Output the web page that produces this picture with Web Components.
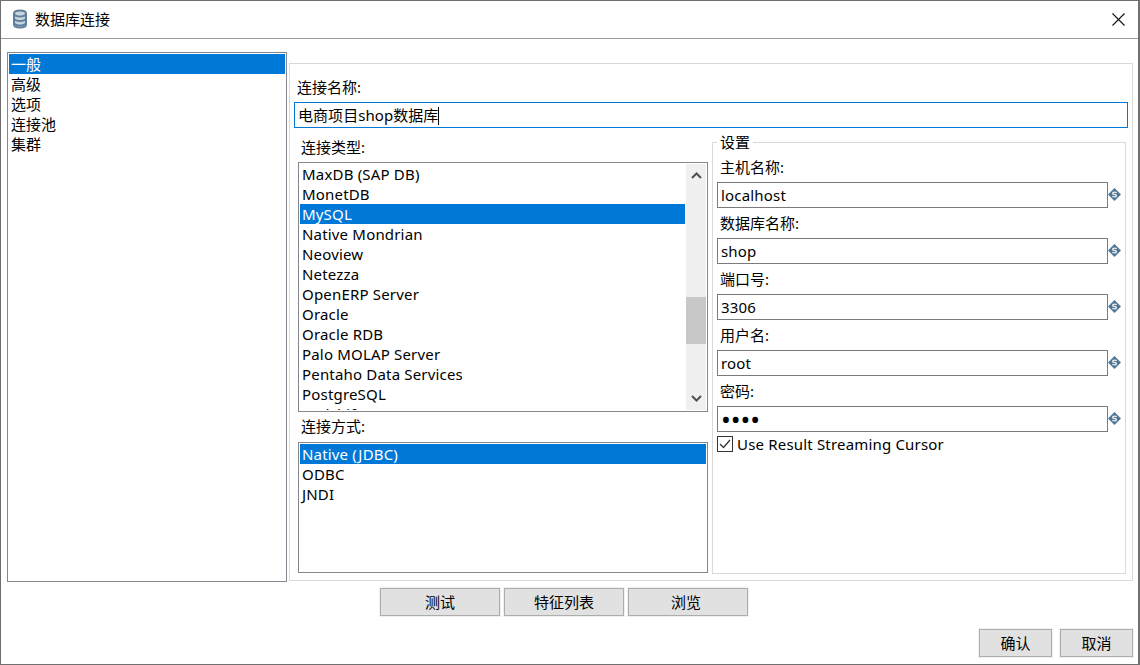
<!DOCTYPE html>
<html lang="zh"><head><meta charset="utf-8"><title>数据库连接</title>
<style>
html,body{margin:0;padding:0;background:#fff}
body{font:15px/20px "Noto Sans","Noto Sans CJK SC",sans-serif;color:#000;width:1140px;height:665px;overflow:hidden}
</style></head><body>
<db-dialog heading="数据库连接">
  <db-list slot="nav" style="width:280px;height:530px">
    <db-item selected>一般</db-item><db-item>高级</db-item><db-item>选项</db-item><db-item>连接池</db-item><db-item>集群</db-item>
  </db-list>
  <db-general slot="main">
    <db-label slot="name-label" style="padding-left:3px">连接名称:</db-label>
    <db-input slot="name-input" focused value="电商项目shop数据库"></db-input>
    <db-label slot="type-label">连接类型:</db-label>
    <db-list slot="type-list" scrollbar style="height:250px;letter-spacing:.18px">
      <db-item>MaxDB (SAP DB)</db-item><db-item>MonetDB</db-item><db-item selected>MySQL</db-item><db-item>Native Mondrian</db-item><db-item>Neoview</db-item><db-item>Netezza</db-item><db-item>OpenERP Server</db-item><db-item>Oracle</db-item><db-item>Oracle RDB</db-item><db-item>Palo MOLAP Server</db-item><db-item>Pentaho Data Services</db-item><db-item>PostgreSQL</db-item><db-item>Redshift</db-item>
    </db-list>
    <db-label slot="method-label" style="height:30px;padding-top:4px;box-sizing:border-box">连接方式:</db-label>
    <db-list slot="method-list" style="height:131px;letter-spacing:.18px">
      <db-item selected>Native (JDBC)</db-item><db-item>ODBC</db-item><db-item>JNDI</db-item>
    </db-list>
    <db-group slot="settings" legend="设置">
      <db-field label="主机名称:" value="localhost"></db-field>
      <db-field label="数据库名称:" value="shop"></db-field>
      <db-field label="端口号:" value="3306"></db-field>
      <db-field label="用户名:" value="root"></db-field>
      <db-field label="密码:" value="••••" secret></db-field>
      <db-check checked>Use Result Streaming Cursor</db-check>
    </db-group>
  </db-general>
  <db-button slot="tools" style="width:120px">测试</db-button>
  <db-button slot="tools" style="width:120px">特征列表</db-button>
  <db-button slot="tools" style="width:120px;padding-right:4px">浏览</db-button>
  <db-button slot="actions" style="width:73px">确认</db-button>
  <db-button slot="actions" style="width:73px">取消</db-button>
</db-dialog>
<script>
function define(name, css, html){
  customElements.define(name, class extends HTMLElement{
    constructor(){super();this.attachShadow({mode:'open'});}
    connectedCallback(){
      const h = typeof html==='function'?html(this):html;
      this.shadowRoot.innerHTML='<style>'+css+'</style>'+h;
    }
  });
}
define('db-dialog',`
  :host{display:flex;flex-direction:column;box-sizing:border-box;width:1140px;height:665px;border:1px solid #6f6f6f;border-width:1px 2px 1px 1px;background:#fff}
  .title{display:flex;align-items:center;height:37px;flex:none;border-bottom:1px solid #9a9a9a;box-sizing:content-box}
  .title svg.db{margin-left:9px;flex:none;position:relative;top:-1px}
  .title span{margin-left:5px;flex:1;position:relative;top:-1px}
  .title svg.x{margin-right:13px;flex:none}
  .body{display:flex;flex:none;padding:13px 0 0 6px;height:530px}
  .body ::slotted([slot=nav]){flex:none}
  .body ::slotted([slot=main]){flex:none;margin:11px 0 0 2px}
  .tools{display:flex;gap:4px;padding-left:379px;margin-top:6px;flex:none}
  .actions{display:flex;justify-content:flex-end;gap:8px;padding-right:5px;margin-top:13px;flex:none}
`,el=>`
  <div class="title">
    <svg class="db" width="20" height="20" viewBox="0 0 20 20" fill="none">
      <path d="M4 4.500C4 2.400 7 1.500 10 1.500s6 .9 6 3v11c0 2.100-3 3-6 3s-6-.9-6-3z" fill="#c9d5df" stroke="#5f7f9b" stroke-width="2"/>
      <path d="M4 5c1 1.800 3.200 2.500 6 2.500S15 6.800 16 5M4 9.500c1 1.800 3.200 2.500 6 2.500s5-.7 6-2.500M4 14c1 1.800 3.200 2.500 6 2.500s5-.7 6-2.500" stroke="#5f7f9b" stroke-width="1.800"/>
    </svg>
    <span>${el.getAttribute('heading')}</span>
    <svg class="x" width="13" height="13" viewBox="0 0 13 13"><path d="M.5.500l12 12M12.500.500l-12 12" stroke="#111" stroke-width="1.100" fill="none"/></svg>
  </div>
  <div class="body"><slot name="nav"></slot><slot name="main"></slot></div>
  <div class="tools"><slot name="tools"></slot></div>
  <div class="actions"><slot name="actions"></slot></div>
`);
define('db-general',`
  :host{display:block;box-sizing:border-box;width:844px;height:518px;border:1px solid #d9d9d9;padding:13px 4px 0}
  .cols{display:flex;gap:4px;padding-left:4px;margin-top:4px}
  .left{width:410px;flex:none;margin-top:5px}
  .left ::slotted(db-label){padding-left:3px}
`,`
  <slot name="name-label"></slot><slot name="name-input"></slot>
  <div class="cols">
    <div class="left"><slot name="type-label"></slot><slot name="type-list"></slot><slot name="method-label"></slot><slot name="method-list"></slot></div>
    <slot name="settings"></slot>
  </div>
`);
define('db-label',`:host{display:block;height:25px;line-height:20px;white-space:nowrap}`,`<slot></slot>`);
define('db-list',`
  :host{display:block;box-sizing:border-box;border:1px solid #828790;background:#fff;overflow:hidden;position:relative}
  .wrap{display:flex;height:100%;box-sizing:border-box;padding:1px}
  .items{flex:1;min-width:0;overflow:hidden}
  .bar{flex:none;width:20px;margin-left:1px;background:#f0f0f0;display:flex;flex-direction:column;align-items:center;justify-content:space-between}
  .bar svg{flex:none;margin:8px 0}
  .thumb{position:absolute;top:134px;right:1px;width:20px;height:47px;background:#c8c8c8}
`,el=>`
  <div class="wrap"><div class="items"><slot></slot></div>
  ${el.hasAttribute('scrollbar')?`<div class="bar">
    <svg width="11" height="7" viewBox="0 0 11 7"><path d="M1 6l4.500-4.500L10 6" fill="none" stroke="#505050" stroke-width="2"/></svg>
    <svg width="11" height="7" viewBox="0 0 11 7"><path d="M1 1l4.500 4.500L10 1" fill="none" stroke="#505050" stroke-width="2"/></svg>
  </div><div class="thumb"></div>`:''}</div>
`);
define('db-item',`
  :host{display:block;height:20px;line-height:20px;padding-left:2px;white-space:nowrap;color:#000}
  :host([selected]){background:#0078d7;color:#fff}
`,`<slot></slot>`);
define('db-input',`
  :host{display:block;box-sizing:border-box;height:26px;border:1px solid #7a7a7a;background:#fff;padding:0 3px;line-height:24px;white-space:nowrap;flex:1;min-width:0;overflow:hidden;letter-spacing:.18px}
  :host([focused]){border-color:#0078d7;letter-spacing:.05px}
  :host([secret]){font-size:26px;letter-spacing:0;overflow:visible}
  .caret{display:inline-block;width:1px;height:18px;background:#000;vertical-align:-4px}
`,el=>`<span>${el.getAttribute('value')}</span>${el.hasAttribute('focused')?'<span class="caret"></span>':''}`);
define('db-group',`
  :host{display:block;width:414px;flex:none}
  fieldset{margin:0;padding:5px 4px 0;border:1px solid #d9d9d9;height:442px;box-sizing:border-box}
  legend{padding:0 3px;margin-left:0;line-height:20px}
`,el=>`<fieldset><legend>${el.getAttribute('legend')}</legend><slot></slot></fieldset>`);
define('db-field',`
  :host{display:block;height:56px}
  .l{padding-left:3px;height:25px;line-height:20px;white-space:nowrap}
  .row{display:flex;align-items:center;width:404px}
  db-input{width:391px;flex:none}
  svg{flex:none;margin-bottom:2px}
`,el=>`<div class="l">${el.getAttribute('label')}</div>
  <div class="row"><db-input value="${el.getAttribute('value')}" ${el.hasAttribute('secret')?'secret':''}></db-input>
  <svg width="13" height="13" viewBox="0 0 13 13"><path d="M6.500 0L13 6.500 6.500 13 0 6.500z" fill="#4f7795"/><path d="M8.500 5C8 3.900 4.700 3.800 4.500 5.300 4.400 6.900 8.500 6.100 8.500 7.800 8.300 9.200 5 9.100 4.400 8" fill="none" stroke="#e8eef2" stroke-width="1.300"/></svg></div>`);
define('db-check',`
  :host{display:flex;align-items:center;height:16px;gap:4px;margin-top:-1px;white-space:nowrap;letter-spacing:.18px}
  svg{flex:none}
`,`<svg width="16" height="16" viewBox="0 0 16 16"><rect x=".5" y=".5" width="15" height="15" fill="#fff" stroke="#333"/><path d="M3 8l3.500 3.500L13 4" fill="none" stroke="#333" stroke-width="1.300"/></svg><slot></slot>`);
define('db-button',`
  :host{display:block;box-sizing:border-box;height:28px;background:#e1e1e1;border:1px solid #adadad;outline:1px solid #f0f0f0;text-align:center;line-height:26px;white-space:nowrap}
`,`<slot></slot>`);
</script>
</body></html>
